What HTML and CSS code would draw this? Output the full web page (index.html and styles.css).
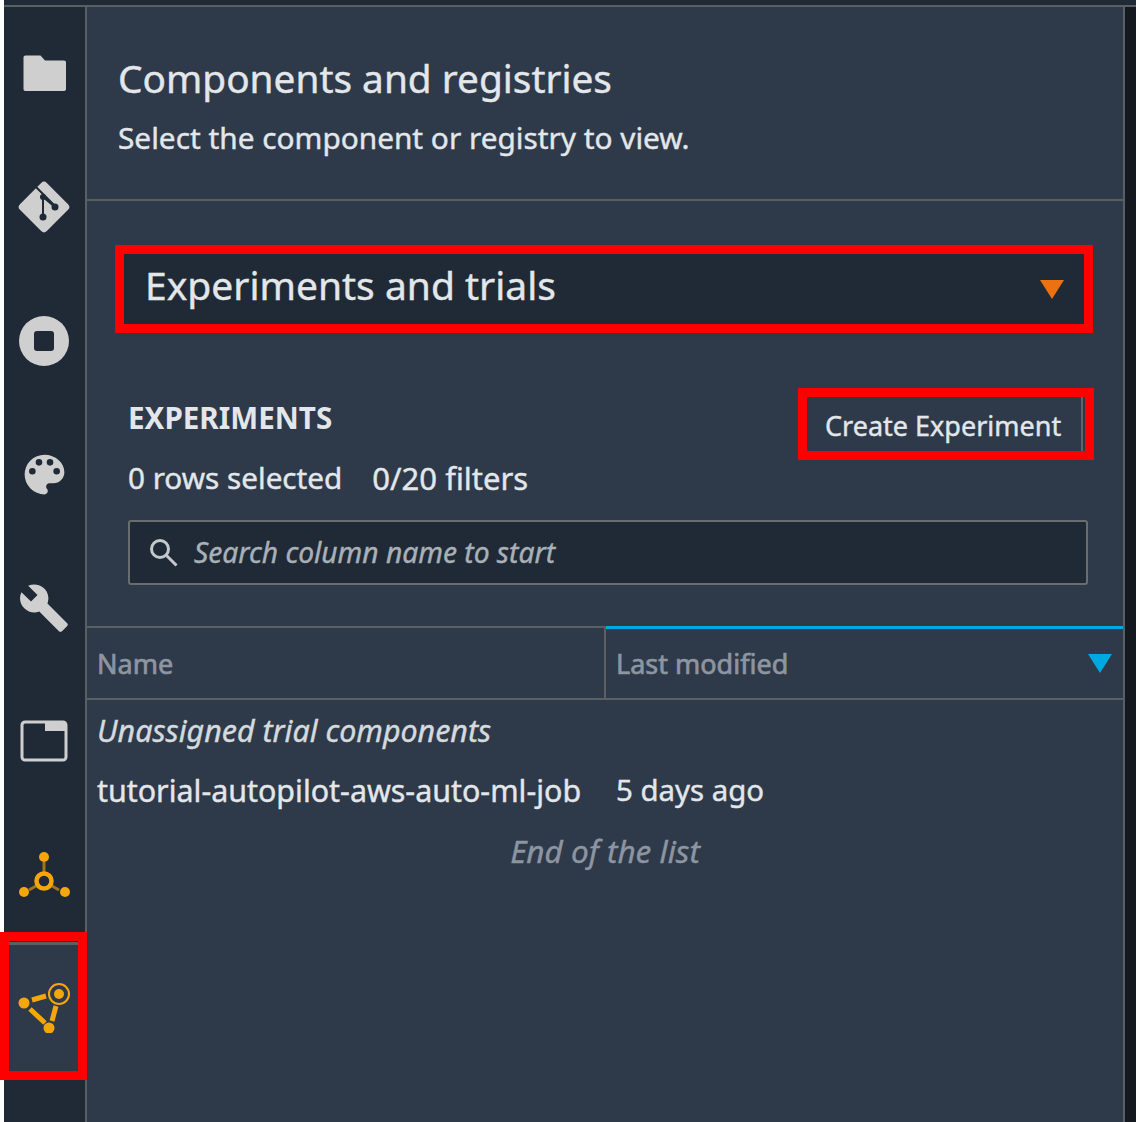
FILE: index.html
```html
<!DOCTYPE html>
<html lang="en">
<head>
  <meta charset="UTF-8" />
  <title>Components and registries</title>
  <link rel="stylesheet" href="styles.css">
</head>
<body>
  <div class="topbar"></div>
  <div class="app">
    <nav class="rail">
      <div class="rail-item">
        <svg width="48" height="48" viewBox="0 0 48 48"><path d="M3.500 7.500c0-1.300.8-2 2-2h15L25 10.500h19c1.300 0 2 .8 2 2V39c0 1.300-.8 2-2 2H5.500c-1.300 0-2-.8-2-2z" fill="#cfcfcf"/></svg>
      </div>
      <div class="rail-item">
        <svg width="56" height="56" viewBox="0 0 56 56">
          <rect x="9" y="9" width="38" height="38" rx="4" transform="rotate(45 28 28)" fill="#cfcfcf"/>
          <path d="M20 8l20 20M27 16v22M27 18l12 10" stroke="#1f2a36" stroke-width="2" fill="none"/>
          <circle cx="27" cy="18" r="3" fill="#1f2a36"/><circle cx="39" cy="28" r="3.500" fill="#1f2a36"/><circle cx="27" cy="38" r="3.500" fill="#1f2a36"/>
        </svg>
      </div>
      <div class="rail-item">
        <svg width="56" height="56" viewBox="0 0 56 56"><circle cx="28" cy="28" r="25" fill="#cfcfcf"/><rect x="18" y="18" width="20" height="20" rx="3" fill="#1f2a36"/></svg>
      </div>
      <div class="rail-item">
        <svg width="53" height="53" viewBox="0 0 24 24"><path fill="#cfcfcf" d="M12 3a9 9 0 0 0 0 18c.83 0 1.500-.67 1.500-1.500 0-.39-.15-.74-.39-1.010-.23-.26-.38-.61-.38-.99 0-.83.67-1.500 1.500-1.500H16c2.760 0 5-2.240 5-5 0-4.420-4.030-8-9-8zm-5.500 9a1.500 1.500 0 1 1 0-3 1.500 1.500 0 0 1 0 3zm3-4a1.500 1.500 0 1 1 0-3 1.500 1.500 0 0 1 0 3zm5 0a1.500 1.500 0 1 1 0-3 1.500 1.500 0 0 1 0 3zm3 4a1.500 1.500 0 1 1 0-3 1.500 1.500 0 0 1 0 3z"/></svg>
      </div>
      <div class="rail-item">
        <svg width="52" height="52" viewBox="0 0 24 24"><path fill="#cfcfcf" d="M22.700 19l-9.100-9.100c.9-2.300.4-5-1.500-6.900-2-2-5-2.400-7.400-1.300L9 6 6 9 1.600 4.700C.4 7.100.9 10.100 2.900 12.100c1.900 1.900 4.600 2.400 6.900 1.500l9.100 9.100c.4.4 1 .4 1.400 0l2.300-2.300c.5-.4.5-1.100.1-1.400z"/></svg>
      </div>
      <div class="rail-item">
        <svg width="50" height="44" viewBox="0 0 50 44"><rect x="3" y="3" width="44" height="38" rx="3" fill="none" stroke="#cfcfcf" stroke-width="3"/><rect x="26" y="3" width="21" height="9" fill="#cfcfcf"/></svg>
      </div>
      <div class="rail-item">
        <svg width="56" height="56" viewBox="0 0 56 56" stroke="#f5a60a" fill="#f5a60a">
          <path d="M28 15v11M20 39l-7 4M36 39l7 4" stroke-width="3" opacity=".6"/>
          <circle cx="28" cy="10" r="5" stroke="none"/><circle cx="28" cy="34" r="7.500" fill="none" stroke-width="4.500"/>
          <circle cx="8" cy="45" r="5" stroke="none"/><circle cx="49" cy="45" r="5" stroke="none"/>
        </svg>
      </div>
      <div class="rail-item active">
        <svg width="56" height="56" viewBox="0 0 56 56" stroke="#f5a60a" fill="#f5a60a">
          <path d="M16 23l14-4M14 32l15 14M36 44l4-15" stroke-width="5" fill="none"/>
          <circle cx="8" cy="26" r="5.500" stroke="none"/><circle cx="33" cy="51" r="5.500" stroke="none"/>
          <circle cx="43" cy="17" r="10" fill="none" stroke-width="2"/><circle cx="43" cy="17" r="5" stroke="none"/>
        </svg>
        <span class="mark"></span>
      </div>
    </nav>

    <main class="panel">
      <header class="panel-head">
        <h1>Components and registries</h1>
        <p>Select the component or registry to view.</p>
      </header>

      <section class="picker">
        <div class="select">
          <span class="select-text">Experiments and trials</span>
          <span class="caret caret-orange"></span>
        </div>
      </section>

      <section class="list-head">
        <div class="list-title">
          <div class="label">EXPERIMENTS</div>
          <button class="create">Create Experiment</button>
        </div>
        <div class="counts"><span>0 rows selected</span><span class="filters">0/20 filters</span></div>
        <div class="search">
          <svg width="32" height="32" viewBox="0 0 32 32" fill="none" stroke="#c4c8cc"><circle cx="13" cy="12" r="8.500" stroke-width="3"/><path d="M19.500 18.500l10 10" stroke-width="3"/></svg>
          <span class="search-text">Search column name to start</span>
        </div>
      </section>

      <div class="table-head">
        <div class="col col-name">Name</div>
        <div class="col col-date">Last modified<span class="caret caret-blue"></span></div>
      </div>
      <div class="row row-italic">Unassigned trial components</div>
      <div class="row">
        <span class="col-name">tutorial-autopilot-aws-auto-ml-job</span>
        <span class="age">5 days ago</span>
      </div>
      <div class="row row-end">End of the list</div>
    </main>

    <div class="edge"></div>
  </div>
</body>
</html>
```

FILE: styles.css
```css
* {
  box-sizing: border-box;
}

html, body {
  height: 100%;
}

body {
  margin: 0;
  background: #fff;
  font-family: "Noto Sans", "Open Sans", sans-serif;
  color: #e3e7ea;
  overflow: hidden;
}

.topbar {
  height: 7px;
  margin-left: 4px;
  background: #1f2a36;
  border-bottom: 2px solid #5a5f64;
}

.app {
  display: flex;
  height: 1115px;
  margin-left: 4px;
  background: #1f2a36;
}

.rail {
  width: 83px;
  flex: none;
  border-right: 2px solid #5a5f64;
  background: #1f2a36;
}

.rail-item {
  height: 133.500px;
  padding-right: 1px;
  display: flex;
  align-items: center;
  justify-content: center;
}

.rail-item.active {
  position: relative;
  background: #2e3a4a;
  border-top: 3px solid #5a5f64;
  margin-right: -2px;
  height: 129.500px;
  padding: 0 3px 5px 0;
}

.mark {
  position: absolute;
  left: -4px;
  right: 0;
  top: -13px;
  bottom: -9px;
  border: 9px solid #f00;
}

.panel {
  width: 1036px;
  flex: none;
  background: #2e3a4a;
  -webkit-text-stroke: 0.4px;
}

.panel-head {
  height: 194px;
  padding: 46px 0 0 31px;
  border-bottom: 2px solid #5a5f64;
}

.panel-head h1 {
  margin: 0;
  font-size: 38.800px;
  line-height: 50px;
  font-weight: 400;
}

.panel-head p {
  margin: 17px 0 0;
  font-size: 29.800px;
  line-height: 36px;
}

.picker {
  padding: 44px 30px 0 28px;
}

.select {
  height: 88px;
  border: 9px solid #f00;
  background: #1f2a36;
  padding: 0 20px 0 21px;
  display: flex;
  align-items: center;
  justify-content: space-between;
  font-size: 39px;
}

.select-text {
  margin-bottom: 10px;
}

.caret {
  width: 0;
  height: 0;
  border-style: solid;
  border-color: transparent;
  border-width: 19px 12px 0;
}

.caret-orange {
  border-top-color: #ec7211;
}

.caret-blue {
  border-top-color: #00a8e1;
}

.list-head {
  padding: 55px 29px 0 41px;
}

.list-title {
  display: flex;
  justify-content: space-between;
  height: 72px;
}

.label {
  font-size: 29.600px;
  font-weight: 700;
  line-height: 36px;
  padding-top: 12px;
  -webkit-text-stroke: 0;
}

.create {
  width: 296px;
  height: 72px;
  border: 9px solid #f00;
  background: #2e3a4a;
  color: #e3e7ea;
  font: 27px "Noto Sans", "Open Sans", sans-serif;
  text-align: left;
  padding: 3px 0 0 18px;
  box-shadow: inset -2px 0 0 #2e3a4a, inset -4px 0 0 #5f6468;
  -webkit-text-stroke: 0.4px;
}

.counts {
  display: flex;
  gap: 30px;
  font-size: 29.700px;
  line-height: 36px;
}

.filters {
  font-size: 31px;
}

.search {
  height: 65px;
  margin: 24px 6px 0 0;
  padding: 0 0 0 17px;
  display: flex;
  align-items: center;
  gap: 15px;
  background: #1f2a36;
  border: 2px solid #696d70;
  border-radius: 3px;
  color: #aab0b7;
  font-style: italic;
  font-size: 28.200px;
}

.search-text {
  margin-bottom: 2px;
}

.table-head {
  display: flex;
  height: 74px;
  margin-top: 41px;
  border-top: 2px solid #5a5f64;
  border-bottom: 2px solid #5a5f64;
  color: #8d95a1;
  font-size: 27px;
  -webkit-text-stroke: 0.7px;
}

.col {
  display: flex;
  align-items: center;
}

.col-name {
  width: 519px;
  padding-left: 10px;
  display: inline-block;
}

.table-head .col-name {
  display: flex;
  border-right: 2px solid #5a5f64;
}

.col-date {
  flex: 1;
  padding: 0 11px 0 10px;
  justify-content: space-between;
}

.table-head .col-date {
  border-top: 3px solid #00a8e1;
  margin-top: -2px;
}

.row {
  height: 60px;
  display: flex;
  align-items: center;
  font-size: 30.400px;
}

.age {
  padding-left: 10px;
  font-size: 29.400px;
}

.row-italic {
  padding-left: 10px;
  font-style: italic;
  color: #d5dade;
}

.row-end {
  justify-content: center;
  font-style: italic;
  font-size: 31.500px;
  color: #8d95a1;
}

.edge {
  flex: 1;
  border-left: 2px solid #5a5f64;
  background: #14181f;
}
```
